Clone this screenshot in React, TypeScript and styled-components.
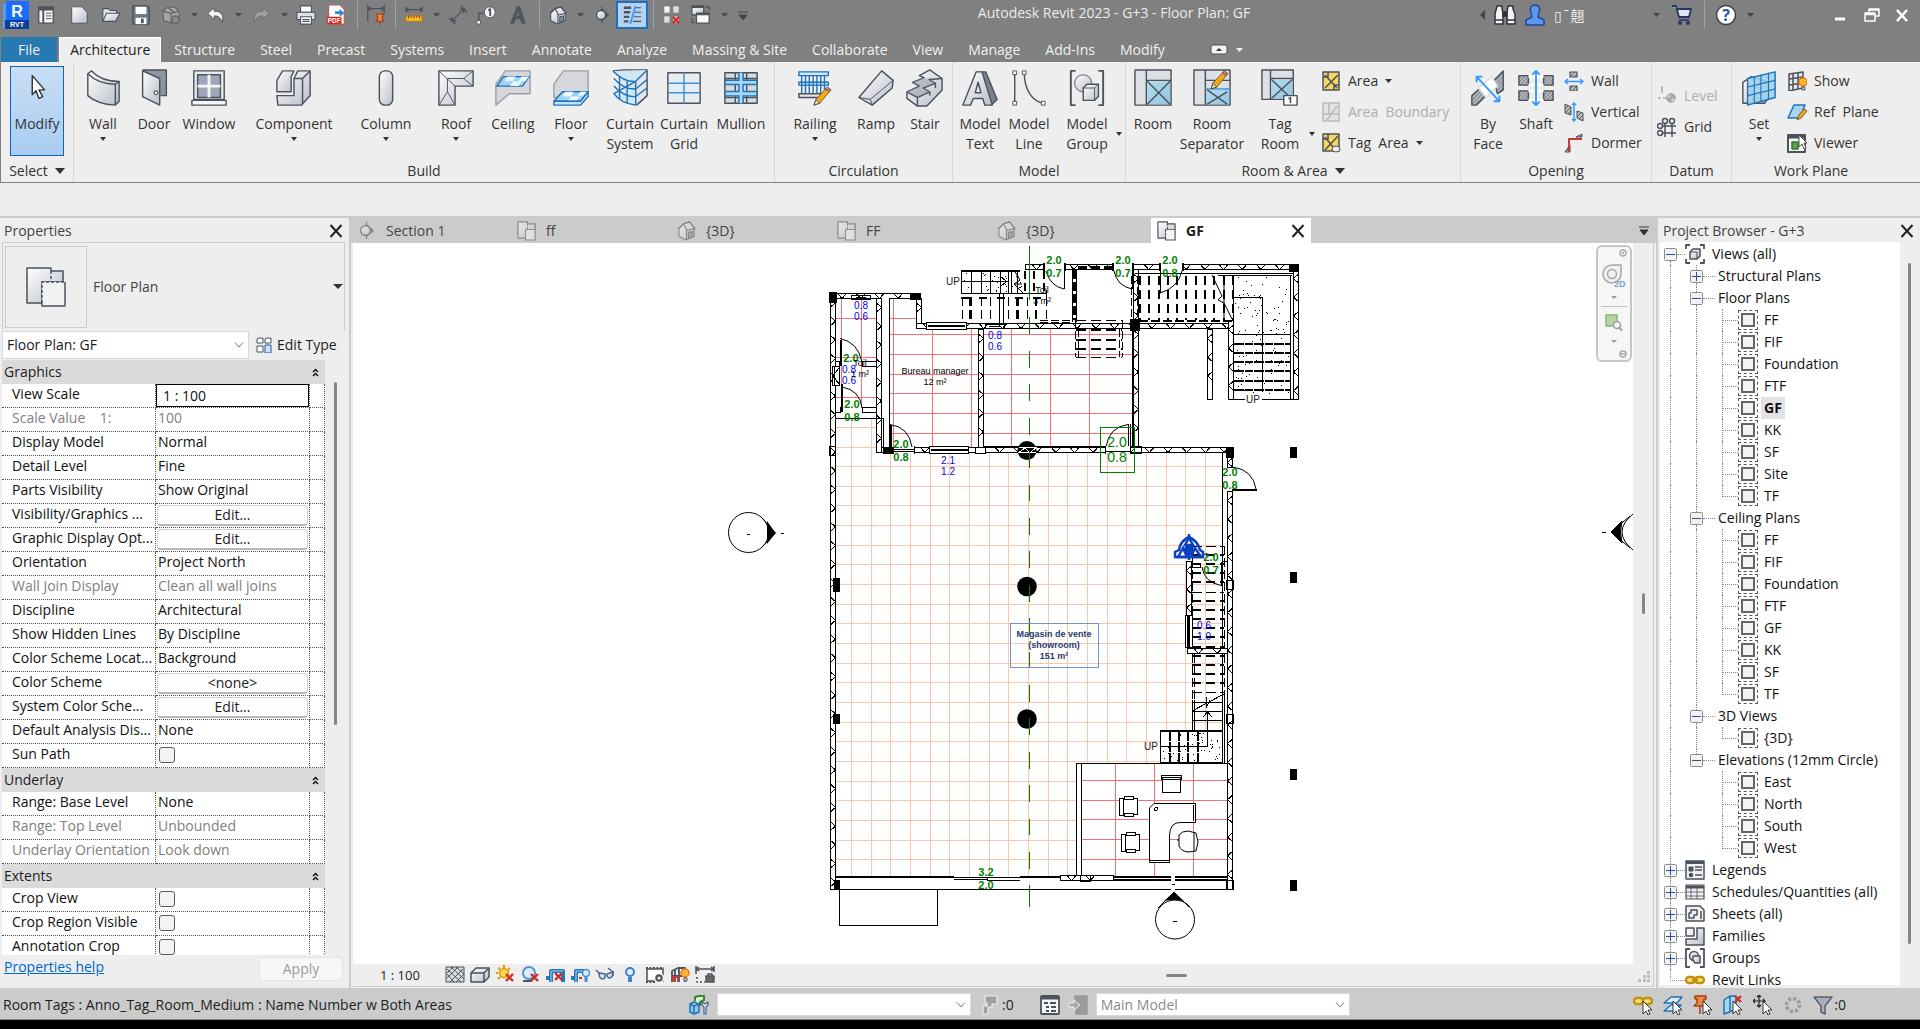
import React from "react";
import styled, { createGlobalStyle, css } from "styled-components";

const GlobalStyle = createGlobalStyle`
  *, *::before, *::after { box-sizing: border-box; }
  html, body { margin: 0; padding: 0; }
  body, button, input, select, table {
    font-family: "Open Sans", "Noto Sans", "Noto Sans CJK TC", sans-serif;
    font-size: 14px;
    line-height: 20px;
    color: #1e1e1e;
  }
  button, input, select { margin: 0; padding: 0; border: 0; background: none; }
`;

/* ---------- shared drawing helpers ---------- */

const METAL = "url(#metal)";
const GLASS = "url(#glass)";
const INK = "#4b525c";
const BLUE = "#1f73b8";

const Defs = () => (
  <HiddenSvg aria-hidden="true">
    <defs>
      <linearGradient id="metal" x1="0" y1="0" x2="1" y2="1">
        <stop offset="0" stopColor="#ffffff" />
        <stop offset="1" stopColor="#b9bec8" />
      </linearGradient>
      <linearGradient id="glass" x1="0" y1="0" x2="1" y2="1">
        <stop offset="0" stopColor="#b5dcee" />
        <stop offset="1" stopColor="#8ec6e0" />
      </linearGradient>
      <pattern id="hatch" width="4" height="4" patternUnits="userSpaceOnUse">
        <rect width="4" height="4" fill="#b9bdc4" />
        <path d="M0 4L4 0" stroke="#5a6068" strokeWidth="1" />
      </pattern>
    </defs>
  </HiddenSvg>
);

const HiddenSvg = styled.svg`
  position: absolute;
  width: 0;
  height: 0;
`;

const Svg = styled.svg`
  display: block;
  flex: none;
`;

type IconProps = { size?: number; box?: number; children: React.ReactNode };
const Icon = ({ size = 22, box, children }: IconProps) => (
  <Svg width={size} height={size} viewBox={`0 0 ${box ?? size} ${box ?? size}`} fill="none" stroke={INK} strokeWidth="1.5" strokeLinejoin="round" aria-hidden="true">
    {children}
  </Svg>
);

const Caret = ({ w = 7, h = 4, color = "#333" }: { w?: number; h?: number; color?: string }) => (
  <Svg width={w} height={h} viewBox="0 0 8 5" preserveAspectRatio="none" aria-hidden="true">
    <path d="M0 0H8L4 5Z" fill={color} />
  </Svg>
);

const RedX = ({ x, y, s = 7 }: { x: number; y: number; s?: number }) => (
  <path d={`M${x} ${y}l${s} ${s}M${x + s} ${y}l${-s} ${s}`} stroke="#cf2f27" strokeWidth="2.4" />
);

const Pencil = ({ x, y }: { x: number; y: number }) => (
  <g transform={`translate(${x} ${y})`} strokeWidth="1">
    <path d="M0 18L2 12L12 1L16 4L6 16Z" fill="#f6a81c" stroke="#7a5a1c" />
    <path d="M12 1L14 -1L18 2L16 4Z" fill="#c98a7a" stroke="#6a4a40" />
    <path d="M0 18L2 12L6 16Z" fill="#f3dfc0" stroke="#5b4c3a" />
  </g>
);

/* ---------- quick access toolbar ---------- */

const HousePaths = () => (
  <g strokeWidth="1.2">
    <path d="M3 9L8 4L14 2L19 8V17L10 21L3 17Z" fill={METAL} />
    <path d="M2 9L8 4L11 10V21M8 4L14 2L20 9L11 11" />
    <path d="M13 13l4-1v6l-4 1z" fill="#8a9099" />
  </g>
);
const SectionPaths = () => (
  <g>
    <path d="M11 2V20" strokeWidth="1.2" />
    <path d="M11 5L18 11L11 17Z" fill={INK} />
    <circle cx="10" cy="11" r="5" fill={METAL} />
  </g>
);
const PlanPaths = () => (
  <g strokeWidth="1.2">
    <path d="M2 2H12V4H20V10H10V19H2Z" fill={METAL} />
    <path d="M10 10H20V21H10Z" fill="#f4f4f6" stroke="none" />
    <path d="M12 4V10M10 19V10H20" strokeDasharray="2 1.4" />
    <path d="M10 19V21H20V10" />
  </g>
);
const PreviewPaths = () => (
  <g strokeWidth="1.5">
    <path d="M2 2H26V5H38V16H17V37H2Z" fill="url(#metal)" />
    <path d="M17 16H40V40H17Z" fill="#f1f2f4" stroke="none" />
    <path d="M26 5V16M17 37V16H40" strokeDasharray="3 2" />
    <path d="M17 37V40H40V16" />
  </g>
);

const qaIcons: Record<string, React.ReactNode> = {
  list: (
    <g>
      <rect x="3" y="2" width="16" height="18" fill="#f4f4f4" />
      <path d="M3 5H19M3 3H19M8 6V20" strokeWidth="2" />
      <path d="M11 9H17M11 12H17M11 15H17" strokeWidth="1" />
    </g>
  ),
  page: <path d="M3 2H14L20 8V20H3Z" fill={METAL} strokeWidth="1" />,
  open: (
    <g strokeWidth="1.2">
      <path d="M2 18V4H8L10 6H17V9" fill="#dfe2e6" />
      <path d="M2 18L6 9H21L16 18Z" fill={METAL} />
    </g>
  ),
  save: (
    <g strokeWidth="1.4">
      <path d="M2 1H18L20 3V21H2Z" fill="#6d7683" />
      <rect x="5" y="2" width="12" height="8" fill="#fff" stroke="none" />
      <rect x="5" y="14" width="12" height="7" fill="#fff" stroke="none" />
      <rect x="11" y="15" width="3" height="5" fill={INK} stroke="none" />
    </g>
  ),
  cube: (
    <g stroke="#5f5f5f" strokeWidth="1.2">
      <path d="M2 7L8 2L16 3L20 8V16L12 20L3 17Z" fill="#a5a5a5" />
      <path d="M2 7L11 9L20 7M11 9V20M8 3L14 8" />
      <circle cx="16" cy="16" r="4" fill="#8b8b8b" />
    </g>
  ),
  undo: <path d="M2 9L9 3V7C16 6 20 11 18 19C16 14 14 12 9 12V16Z" fill="#f4f4f4" strokeWidth="1" />,
  redo: <path d="M20 9L13 3V7C6 6 2 11 4 19C6 14 8 12 13 12V16Z" fill="#a0a0a0" stroke="#6c6c6c" strokeWidth="1" />,
  print: (
    <g strokeWidth="1.2">
      <rect x="5" y="1" width="12" height="7" fill="#fff" />
      <rect x="1" y="8" width="20" height="8" rx="1" fill="#dde0e4" />
      <path d="M5 13H17V21H5Z" fill="#fff" />
      <path d="M7 16H15M7 18H15" />
    </g>
  ),
  pdf: (
    <g>
      <path d="M5 0H15L20 5V21H3V0Z" fill="#fff" stroke="#c44" strokeWidth="1" />
      <path d="M10 7H15V4L20 9L15 13V10H10Z" fill="#2b86d0" stroke="none" />
      <rect x="1" y="13" width="16" height="8" fill="#e2231a" stroke="none" />
      <text x="2" y="20" fontSize="7" fontWeight="700" fill="#fff" stroke="none" fontFamily="Liberation Sans, sans-serif">PDF</text>
    </g>
  ),
  pin: (
    <g strokeWidth="1.4">
      <path d="M2 0V18M20 0V10M2 4H20M5 2L2 4L5 6M17 2L20 4L17 6" />
      <path d="M12 10H19V13H18V16L20 18H11L13 16V13H12ZM15.500 18V22" fill="#f08a3c" stroke="#a4431a" />
    </g>
  ),
  measure: (
    <g strokeWidth="1.4">
      <path d="M2 2V8M20 2V8M2 5H20M5 3L2 5L5 7M17 3L20 5L17 7" />
      <rect x="2" y="12" width="18" height="6" fill="#f8bd2c" stroke="#b77a12" />
      <path d="M5 12V15M8 12V14M11 12V15M14 12V14M17 12V15" stroke="#7a4c00" strokeWidth="1" />
    </g>
  ),
  dim: <path d="M4 18L18 4M1 14L8 21M14 1L21 8M5 13L4 18L9 17M13 5L18 4L17 9" />,
  tag: (
    <g>
      <circle cx="14" cy="8" r="6" fill="#f4f4f4" strokeWidth="1" />
      <path d="M2 18V9H7" />
      <rect x="0" y="17" width="4" height="4" fill="#fff" strokeWidth="1" />
      <path d="M12.500 6L14.500 4.500V12" strokeWidth="2" />
    </g>
  ),
  text: <path d="M3 20L10 2H13L19 20H15L13.500 15H8L6.500 20ZM9 12H13L11 6Z" fill="#50555c" stroke="#50555c" strokeWidth="1" />,
  house: <HousePaths />,
  section: <SectionPaths />,
  thin: (
    <g strokeWidth="2">
      <path d="M2 3H10M2 8H9M2 13H8M2 18H7" strokeWidth="2.6" />
      <path d="M15 3H21M14 8H21M13 13H21M12 18H21" strokeWidth="1.2" />
      <path d="M15 1L9 21" stroke="#3399ff" />
    </g>
  ),
  close: (
    <g strokeWidth="1">
      <path d="M2 1H9V9H2ZM12 1H19V9H12ZM2 12H9V20H2ZM12 12H19V20H12Z" fill={METAL} stroke="#777" />
      <RedX x={12} y={13} />
    </g>
  ),
  windows: (
    <g strokeWidth="1.4">
      <rect x="1" y="1" width="13" height="10" fill={METAL} />
      <rect x="6" y="9" width="14" height="11" fill="#fafafa" />
      <path d="M6 10H20M1 2H14" strokeWidth="2.4" />
      <path d="M16 2H20V6M1 14V19H4" />
    </g>
  ),
};

type QaItem = { kind: "icon" | "arrow" | "sep"; name?: string; w: number; label?: string };
const qaItems: QaItem[] = [
  { kind: "icon", name: "list", w: 32, label: "Home" },
  { kind: "icon", name: "page", w: 34, label: "New" },
  { kind: "icon", name: "open", w: 30, label: "Open" },
  { kind: "icon", name: "save", w: 30, label: "Save" },
  { kind: "icon", name: "cube", w: 30, label: "Synchronize" },
  { kind: "arrow", w: 16 },
  { kind: "icon", name: "undo", w: 28, label: "Undo" },
  { kind: "arrow", w: 16 },
  { kind: "icon", name: "redo", w: 30, label: "Redo" },
  { kind: "arrow", w: 16 },
  { kind: "icon", name: "print", w: 28, label: "Print" },
  { kind: "icon", name: "pdf", w: 32, label: "Export PDF" },
  { kind: "sep", w: 10 },
  { kind: "icon", name: "pin", w: 28, label: "Pin" },
  { kind: "sep", w: 10 },
  { kind: "icon", name: "measure", w: 28, label: "Measure" },
  { kind: "arrow", w: 16 },
  { kind: "icon", name: "dim", w: 28, label: "Aligned dimension" },
  { kind: "icon", name: "tag", w: 30, label: "Tag" },
  { kind: "icon", name: "text", w: 32, label: "Text" },
  { kind: "sep", w: 10 },
  { kind: "icon", name: "house", w: 28, label: "Default 3D view" },
  { kind: "arrow", w: 16 },
  { kind: "icon", name: "section", w: 28, label: "Section" },
  { kind: "icon", name: "thin", w: 32, label: "Thin lines" },
  { kind: "sep", w: 10 },
  { kind: "icon", name: "close", w: 28, label: "Close inactive views" },
  { kind: "icon", name: "windows", w: 30, label: "Switch windows" },
  { kind: "arrow", w: 16 },
];

const Page = styled.div`
  display: flex;
  flex-direction: column;
  height: 100vh;
  overflow: hidden;
  background: #eeeeee;
`;

const TitleBar = styled.header`
  display: grid;
  grid-template-columns: auto 1fr auto;
  align-items: center;
  height: 36px;
  flex: none;
  padding: 0 4px 6px 2px;
  background: #808080;
`;
const Cluster = styled.div<{ $end?: boolean }>`
  display: flex;
  align-items: center;
  justify-content: ${(p) => (p.$end ? "flex-end" : "flex-start")};
`;
const QaButton = styled.button<{ $w: number; $on?: boolean }>`
  display: flex;
  align-items: center;
  justify-content: center;
  width: ${(p) => p.$w}px;
  height: 28px;
  ${(p) => p.$on && css`
    border: 2px solid #1c6fc4;
    background: #b4d3f3;
  `}
`;
const QaSep = styled.span<{ $w: number }>`
  display: flex;
  justify-content: center;
  width: ${(p) => p.$w}px;
  &::before {
    content: "";
    width: 1px;
    height: 28px;
    background: #a2a2a2;
  }
`;
const WindowTitle = styled.h1`
  margin: 0;
  font-size: 14px;
  font-weight: 400;
  line-height: 20px;
  text-align: center;
  color: #ececec;
  padding-bottom: 4px;
`;
const UserName = styled.span`
  width: 96px;
  padding-left: 4px;
  color: #f0f0f0;
  font-family: "Noto Sans CJK TC", sans-serif;
  font-size: 14px;
`;

const RevitLogo = () => (
  <Svg width="26" height="28" viewBox="0 0 26 28" role="img" aria-label="Revit">
    <path d="M0 4L4 0V24L0 28Z" fill="#5e9cf0" />
    <rect x="3" y="0" width="23" height="20" fill="#1a6dff" />
    <rect x="2" y="19" width="24" height="9" fill="#0c3f96" />
    <text x="14" y="16" textAnchor="middle" fontSize="16" fontWeight="700" fill="#fff" fontFamily="Liberation Sans, sans-serif">R</text>
    <text x="14" y="26" textAnchor="middle" fontSize="7" fontWeight="700" fill="#fff" fontFamily="Liberation Sans, sans-serif">RVT</text>
  </Svg>
);

const TopBar = () => (
  <TitleBar>
    <Cluster>
      <QaButton $w={28} aria-label="Revit"><RevitLogo /></QaButton>
      {qaItems.map((it, i) =>
        it.kind === "sep" ? (
          <QaSep key={i} $w={it.w} />
        ) : it.kind === "arrow" ? (
          <QaButton key={i} $w={it.w} aria-label="More"><Caret color="#4c4c4c" /></QaButton>
        ) : (
          <QaButton key={i} $w={it.w} $on={it.name === "thin"} aria-label={it.label}>
            <Icon size={20} box={22}>{qaIcons[it.name as string]}</Icon>
          </QaButton>
        ),
      )}
      <QaButton $w={22} aria-label="Customize toolbar">
        <Svg width="10" height="9" viewBox="0 0 10 9"><path d="M0 1H10M1 4H9L5 9Z" fill="#444" stroke="#444" /></Svg>
      </QaButton>
    </Cluster>
    <WindowTitle>Autodesk Revit 2023 - G+3 - Floor Plan: GF</WindowTitle>
    <Cluster $end>
      <QaButton $w={16} aria-label="Collapse search">
        <Svg width="5" height="10" viewBox="0 0 5 10"><path d="M5 0V10L0 5Z" fill="#444" /></Svg>
      </QaButton>
      <QaButton $w={30} aria-label="Search">
        <Icon size={22}>
          <path d="M3 2H8V5L9 8V20H1V10ZM14 2H19V5L21 10V20H13V8Z" fill="#f4f4f4" stroke="#2c323c" />
          <path d="M9 8H13V12H9Z" fill="#2c323c" stroke="#2c323c" />
          <path d="M1 16H9M13 16H21" stroke="#2c323c" />
        </Icon>
      </QaButton>
      <QaButton $w={30} aria-label="Account">
        <Icon size={22}>
          <path d="M11 1C15 1 16 4 15.500 7C15 10 14 11 14 13L20 16V21H2V16L8 13C8 11 7 10 6.500 7C6 4 7 1 11 1Z" fill="#5d97ee" stroke="#20489c" />
        </Icon>
      </QaButton>
      <UserName>▯¯翹</UserName>
      <QaButton $w={20} aria-label="Account menu"><Caret color="#444" /></QaButton>
      <QaButton $w={32} aria-label="App store">
        <Icon size={22}>
          <path d="M1 2H5L8 13H18L20 5H6" fill="#dfe5f0" stroke="#24345e" strokeWidth="1.8" />
          <path d="M8 16H18" stroke="#24345e" />
          <circle cx="9" cy="19" r="2" fill="#24345e" stroke="none" />
          <circle cx="17" cy="19" r="2" fill="#24345e" stroke="none" />
        </Icon>
      </QaButton>
      <QaSep $w={12} />
      <QaButton $w={32} aria-label="Help">
        <Icon size={22}>
          <circle cx="11" cy="11" r="9.500" fill="#fff" stroke="#3a4250" />
          <text x="11" y="17" textAnchor="middle" fontSize="16" fontWeight="700" fill="#2456a8" stroke="none" fontFamily="Open Sans, sans-serif">?</text>
        </Icon>
      </QaButton>
      <QaButton $w={16} aria-label="Help menu"><Caret color="#444" /></QaButton>
      <QaSpacer />
      <QaButton $w={32} aria-label="Minimize"><Icon size={16}><path d="M3 12H13" stroke="#fff" strokeWidth="3" /></Icon></QaButton>
      <QaButton $w={32} aria-label="Restore">
        <Icon size={16}><path d="M5 5V2H15V9H11M1 6H11V14H1ZM1 7.500H11M5 3H15" stroke="#fff" /></Icon>
      </QaButton>
      <QaButton $w={28} aria-label="Close"><Icon size={16}><path d="M3 3L13 14M13 3L3 14" stroke="#fff" strokeWidth="2.6" /></Icon></QaButton>
    </Cluster>
  </TitleBar>
);

const QaSpacer = styled.span`
  width: 66px;
`;

/* ---------- ribbon ---------- */

const TabRow = styled.nav`
  display: flex;
  align-items: flex-end;
  height: 26px;
  flex: none;
  gap: 1px;
  padding-left: 1px;
  background: #808080;
`;
const RibbonTab = styled.button<{ $kind?: "file" | "active" }>`
  height: 25px;
  padding: 0 12px;
  color: #f0f0f0;
  white-space: nowrap;
  ${(p) => p.$kind === "file" && css`
    padding: 0 17px;
    margin-right: 1px;
    background: #2779b1;
  `}
  ${(p) => p.$kind === "active" && css`
    padding: 0 10px;
    color: #222;
    background: #eeeeee;
    border: 1px solid #ffffff;
    border-bottom: 0;
  `}
`;
const RibbonExtra = styled.span`
  display: flex;
  align-items: center;
  gap: 8px;
  height: 25px;
  padding-left: 32px;
`;

const Ribbon = styled.div`
  display: flex;
  height: 121px;
  flex: none;
  background: #eeeeee;
  border-left: 1px solid #808080;
  border-bottom: 1px solid #808080;
`;
const Panel = styled.section<{ $w?: number }>`
  display: flex;
  flex-direction: column;
  ${(p) => (p.$w ? css`width: ${p.$w}px; flex: none;` : css`flex: 1;`)}
  & + & { border-left: 1px solid #d8d8d8; }
`;
const PanelBody = styled.div`
  display: flex;
  height: 95px;
  padding: 4px 0 0 3px;
`;
const PanelTitle = styled.div`
  display: flex;
  align-items: center;
  justify-content: center;
  gap: 7px;
  height: 25px;
  padding-top: 3px;
  color: #333;
`;
const Big = styled.button<{ $w: number; $on?: boolean }>`
  display: flex;
  flex-direction: column;
  align-items: center;
  width: ${(p) => p.$w}px;
  height: 90px;
  padding-top: 3px;
  color: #333;
  white-space: nowrap;
  ${(p) => p.$on && css`
    margin-left: 6px;
    padding-top: 2px;
    border: 1px solid #0b66c2;
    background: linear-gradient(#c8def6, #a9cdf1);
  `}
`;
const BigLabel = styled.span`
  margin: 7px 0 3px;
  text-align: center;
  white-space: pre-line;
`;
const SideCaret = styled.span`
  display: flex;
  align-items: flex-end;
  width: 8px;
  height: 70px;
  margin-left: -4px;
`;
const SmallColumn = styled.div<{ $center?: boolean }>`
  display: flex;
  flex-direction: column;
  justify-content: ${(p) => (p.$center ? "center" : "flex-start")};
  gap: 11px;
  padding: 5px 0 0 4px;
  ${(p) => p.$center && css`padding: 0 0 0 2px;`}
`;
const Small = styled.button<{ $off?: boolean }>`
  display: flex;
  align-items: center;
  gap: 7px;
  height: 20px;
  color: ${(p) => (p.$off ? "#adadad" : "#333")};
  white-space: pre;
`;

const ribbonIcons: Record<string, React.ReactNode> = {
  modify: <path d="M15 7L15 27L19 23L22 31L26 29L22 22H28Z" fill="#fff" stroke="#333" />,
  wall: (
    <g>
      <path d="M4 5L8 2Q18 13 37 13V34L33 38Q14 37 4 28Z" fill={METAL} />
      <path d="M4 5Q15 16 33 16L37 13M33 16V38" />
    </g>
  ),
  door: (
    <g>
      <path d="M8 1H33V28H27" fill="#8d95a3" />
      <path d="M8 2L26 10V38L8 29Z" fill={METAL} />
      <circle cx="22" cy="25" r="2" fill="#fff" strokeWidth="1.200" />
    </g>
  ),
  window: (
    <g>
      <rect x="4" y="2" width="32" height="30" fill="#e9ebee" />
      <rect x="8" y="6" width="24" height="24" fill="#9ea7b8" />
      <path d="M20 6V30M8 18H32" stroke="#f2f4f7" strokeWidth="3" />
      <path d="M2 33H38V38H2Z" fill="#f6f7f8" />
    </g>
  ),
  component: (
    <g fill={METAL}>
      <path d="M8 2H20L17 8V24H2V12Z" />
      <path d="M24 2H37V28L28 38H3L2 28H20V10Z" />
      <path d="M20 10H29L37 2M29 10V37" fill="none" />
    </g>
  ),
  column: <rect x="13" y="2" width="14" height="36" rx="6" fill={METAL} />,
  roof: (
    <g>
      <path d="M2 2H38V18H19V38H2Z" fill={METAL} />
      <path d="M2 2L19 18M2 38L11 24L19 38M38 2L28 10L38 18M11 10V24M11 10H28" strokeWidth="1" />
    </g>
  ),
  ceiling: (
    <g>
      <path d="M2 16L12 2H38V26H16L2 38Z" fill="#d5d7da" stroke="#9aa0a8" />
      <path d="M10 8H37L30 18H3Z" fill="#9fd2f4" stroke={BLUE} />
      <path d="M14 8H23L20 13H11ZM20 13H29L26 18H17ZM29 8H37L33 13H26Z" fill="#e8f5fd" stroke="none" />
    </g>
  ),
  floor: (
    <g>
      <path d="M2 16L12 2H38V24L30 30H2Z" fill="#d5d7da" stroke="#9aa0a8" />
      <path d="M11 24H38L30 34H2Z" fill="#9fd2f4" stroke={BLUE} />
      <path d="M2 34H30L38 24V29L30 38H2Z" fill="#bfe3f8" stroke={BLUE} />
      <path d="M14 24H23L20 29H11ZM20 29H29L26 33H17ZM30 24H37L33 28H27Z" fill="#f1f9fe" stroke="none" />
    </g>
  ),
  curtain: (
    <g>
      <path d="M2 2L14 1H38V28L27 38" fill="#e1e5ea" />
      <path d="M2 2Q14 14 26 13L38 1M26 13V38Q10 36 3 26Z" fill="#cfe6f5" stroke={BLUE} />
      <path d="M9 8V32M17 12V36M3 10Q14 22 26 21L38 11M3 18Q14 30 26 29L38 20" stroke={BLUE} />
    </g>
  ),
  grid: (
    <g>
      <rect x="3" y="4" width="34" height="32" fill="#e8edf2" />
      <path d="M20 4V36M3 15H37M3 25H37" stroke="#3c93dc" />
    </g>
  ),
  mullion: (
    <g>
      <rect x="3" y="4" width="34" height="32" fill="#d5dade" />
      <path d="M14 4V36M26 4V36M3 10H37M3 30H37" />
      <path d="M20 4V36M3 14H37M3 26H37" stroke={BLUE} strokeWidth="6" />
      <path d="M20 4V36M4 14H36M4 26H36" stroke="#a8d8f4" strokeWidth="3" />
    </g>
  ),
  railing: (
    <g>
      <path d="M3 3H34V7H3ZM3 14H34V17H3Z" fill="#cfe9fa" stroke={BLUE} />
      <path d="M6 7V26M10 7V26M14 7V26M18 7V26M22 7V26M26 7V26M30 7V22" stroke={BLUE} />
      <path d="M3 26H26V30H3Z" fill="#e2e4e8" />
      <Pencil x={19} y={20} />
    </g>
  ),
  ramp: (
    <g fill={METAL}>
      <path d="M2 30L26 2L38 12L37 20L16 38Z" />
      <path d="M2 30L14 32L38 12M14 32L16 38" fill="none" strokeWidth="1" />
    </g>
  ),
  stair: (
    <g fill={METAL}>
      <path d="M1 24L14 18L7 14L19 9L14 7L25 1L38 10V22L22 39H12L1 31Z" />
      <path d="M1 24L12 30L25 24L18 20L31 15L24 11L38 10M12 30V39M25 24V28M31 15V20" fill="none" />
      <path d="M14 18L25 24L12 30L1 24ZM19 9L31 15L18 20L7 14Z" fill="#7e8694" fillOpacity="0.450" stroke="none" />
    </g>
  ),
  mtext: (
    <g>
      <path d="M20 3H26L38 32L32 38L20 8Z" fill="#7b828e" />
      <path d="M2 38L16 3H22L33 38H25L23 31H13L10 38ZM15 25H21L18 14Z" fill={METAL} />
    </g>
  ),
  mline: (
    <g>
      <path d="M5 4V36M15 4C15 22 24 35 36 36" />
      <path d="M3 2H7V6H3ZM3 34H7V38H3ZM13 2H17V6H13ZM33 34H37V38H33Z" fill="#fff" strokeWidth="1" />
    </g>
  ),
  mgroup: (
    <g>
      <path d="M8 2H3V38H8M32 2H37V38H32" strokeWidth="2" />
      <circle cx="16" cy="15" r="9" fill={METAL} stroke="#8a919c" />
      <path d="M16 20L20 16H32V29L28 33H16Z" fill={METAL} />
      <path d="M16 20H28V33M28 20L32 16" strokeWidth="1" />
    </g>
  ),
  room: (
    <g>
      <rect x="1" y="1" width="38" height="37" fill="#dde0e5" />
      <path d="M13 1V38M13 12H39" />
      <rect x="14" y="13" width="24" height="24" fill={GLASS} stroke="none" />
      <path d="M14 13L38 37M38 13L14 37" />
    </g>
  ),
  separator: (
    <g>
      <rect x="1" y="1" width="38" height="37" fill="#dde0e5" />
      <rect x="14" y="22" width="24" height="15" fill={GLASS} stroke="none" />
      <path d="M13 1V38M13 12H39M15 22L36 37M36 24L15 37" />
      <path d="M13 21H39" stroke="#3c93dc" />
      <Pencil x={19} y={3} />
    </g>
  ),
  tagroom: (
    <g>
      <rect x="1" y="1" width="33" height="31" fill="#dde0e5" />
      <path d="M10 1V32M10 10H34" />
      <rect x="11" y="11" width="22" height="20" fill={GLASS} stroke="none" />
      <path d="M11 11L32 31M33 11L11 31" />
      <rect x="24" y="28" width="14" height="10" fill="#fff" />
      <path d="M29 31.500L31 30V36" strokeWidth="1.600" />
    </g>
  ),
  byface: (
    <g>
      <path d="M26 12L36 2V22L30 26ZM3 38V28L12 20L18 28L8 38Z" fill="url(#hatch)" />
      <path d="M10 20L24 8L30 18L18 30Z" fill="#fff" stroke="#ddd" />
      <path d="M8 8L32 34M8 14V8H14M26 34H32V28" stroke="#3399ff" strokeWidth="2" />
    </g>
  ),
  shaft: (
    <g>
      <path d="M2 7H12V17H2ZM28 7H38V17H28ZM2 23H12V33H2ZM28 23H38V33H28Z" fill="url(#hatch)" />
      <path d="M12 8H28M12 17H28M12 23H28M12 33H28" stroke="#fff" strokeWidth="3" />
      <path d="M20 2V38M16 6L20 2L24 6M16 34L20 38L24 34" stroke="#3399ff" strokeWidth="2" />
    </g>
  ),
  set: (
    <g>
      <path d="M3 14L12 8L30 14V30L26 36L3 36Z" fill={METAL} />
      <path d="M8 10L37 3V30L8 38Z" fill="#9ed0ee" fillOpacity="0.850" stroke={BLUE} />
      <path d="M15 8V36M22 6V34M30 4V32M8 19L37 12M8 28L37 21" stroke={BLUE} strokeWidth="1.200" />
    </g>
  ),
};

const smallIcons: Record<string, React.ReactNode> = {
  area: <g><rect x="2" y="1" width="16" height="18" fill="#f6d565" /><path d="M2 6H7V1M4 4L16 17M17 4L4 17M13 19V14H18" /></g>,
  areab: <g stroke="#b9b9b9"><rect x="2" y="1" width="16" height="18" fill="#e2e2e2" /><path d="M2 12H18M8 1V12M6 18L16 4" /></g>,
  tagarea: <g><rect x="2" y="1" width="16" height="17" fill="#f6d565" /><path d="M2 6H7V1M4 4L12 14M17 3L4 17" /><ellipse cx="15" cy="16" rx="4" ry="3" fill="#eee" strokeWidth="1" /></g>,
  owall: <g><path d="M6 1H13V6H6ZM6 15H13V20H6Z" fill="url(#hatch)" strokeWidth="1.200" /><path d="M1 10.500H19M4 8L1 10.500L4 13M16 8L19 10.500L16 13" stroke="#3399ff" /></g>,
  vertical: <g><path d="M1 2L7 5V13L1 11ZM13 9L19 11V19L13 16Z" fill="url(#hatch)" strokeWidth="1" /><path d="M10 1V19M8 3L10 1L12 3M8 17L10 19L12 17" stroke="#3399ff" /></g>,
  dormer: <g><path d="M1 19L6 12V19ZM12 4L18 1V4Z" fill="url(#hatch)" strokeWidth="1" /><path d="M5 19V6H18" stroke="#c63a34" strokeWidth="2" /></g>,
  level: <g stroke="#aaa"><path d="M1 12H9" strokeDasharray="3 2" /><path d="M4 2L5 1V7" /><circle cx="14" cy="12" r="4" fill="#ddd" /><path d="M14 12V8A4 4 0 0 1 18 12ZM14 12V16A4 4 0 0 1 10 12Z" fill="#aaa" /></g>,
  gridd: <g><circle cx="8" cy="4" r="2.500" /><circle cx="15" cy="4" r="2.500" /><circle cx="3" cy="9" r="2.500" /><circle cx="3" cy="16" r="2.500" /><path d="M8 7V20M15 7V20M6 9H19M6 16H19" /></g>,
  show: <g><path d="M2 3L16 1V17L2 20Z" fill="#e3e6ea" /><path d="M6 2V19M11 2V18M2 8L16 6M2 14L16 12" /><circle cx="16" cy="11" r="4" fill="#ffb534" stroke="#e87b12" /><path d="M15 16H18V19H15Z" fill="#ddd" strokeWidth="1" /></g>,
  refplane: <g><path d="M1 16L7 3H18L13 16Z" fill="#a9d5f0" stroke={BLUE} /><path d="M10 18L12 13L17 7L20 9L14 16Z" fill="#f6a81c" stroke="#7a5a1c" strokeWidth="1" /></g>,
  viewer: <g><rect x="1" y="2" width="17" height="17" fill="#f6f6f6" strokeWidth="2" /><path d="M1 4H18" strokeWidth="3" /><path d="M5 9H11V16H5Z" fill="#59a548" stroke="#39752c" /><path d="M12 2V14L15 11L17 16L19 15L17 10H20Z" fill="#fff" strokeWidth="1" /></g>,
};

type BigItem = { icon: string; label: string; w: number; drop?: boolean; side?: boolean; on?: boolean };
const BigButton = ({ icon, label, w, drop, side, on }: BigItem) => (
  <>
    <Big $w={w} $on={on}>
      <Icon size={38} box={40}>{ribbonIcons[icon]}</Icon>
      <BigLabel>{label}</BigLabel>
      {drop && <Caret w={6} h={4} />}
    </Big>
    {side && <SideCaret><Caret w={6} h={4} /></SideCaret>}
  </>
);
const SmallButton = ({ icon, label, off, drop }: { icon: string; label: string; off?: boolean; drop?: boolean }) => (
  <Small $off={off} disabled={off}>
    <Icon size={20}>{smallIcons[icon]}</Icon>
    {label}
    {drop && <Caret w={7} h={4} />}
  </Small>
);

const buildItems: BigItem[] = [
  { icon: "wall", label: "Wall", w: 52, drop: true },
  { icon: "door", label: "Door", w: 50 },
  { icon: "window", label: "Window", w: 60 },
  { icon: "component", label: "Component", w: 110, drop: true },
  { icon: "column", label: "Column", w: 74, drop: true },
  { icon: "roof", label: "Roof", w: 66, drop: true },
  { icon: "ceiling", label: "Ceiling", w: 48 },
  { icon: "floor", label: "Floor", w: 68, drop: true },
  { icon: "curtain", label: "Curtain\nSystem", w: 50 },
  { icon: "grid", label: "Curtain\nGrid", w: 58 },
  { icon: "mullion", label: "Mullion", w: 56 },
];

const tabs = ["Structure", "Steel", "Precast", "Systems", "Insert", "Annotate", "Analyze", "Massing & Site", "Collaborate", "View", "Manage", "Add-Ins", "Modify"];

const RibbonArea = () => (
  <>
    <TabRow>
      <RibbonTab $kind="file">File</RibbonTab>
      <RibbonTab $kind="active">Architecture</RibbonTab>
      {tabs.map((t) => <RibbonTab key={t}>{t}</RibbonTab>)}
      <RibbonExtra>
        <Svg width="18" height="11" viewBox="0 0 18 11"><rect x="1" y="1" width="16" height="9" rx="2" fill="#f4f4f4" stroke="#4b525c" /><path d="M6 7H12L9 4Z" fill="#333" /></Svg>
        <Caret color="#f0f0f0" />
      </RibbonExtra>
    </TabRow>
    <Ribbon>
      <Panel $w={72}>
        <PanelBody><BigButton icon="modify" label="Modify" w={54} on /></PanelBody>
        <PanelTitle>Select <Caret w={10} h={6} /></PanelTitle>
      </Panel>
      <Panel $w={701}>
        <PanelBody>{buildItems.map((b) => <BigButton key={b.label} {...b} />)}</PanelBody>
        <PanelTitle>Build</PanelTitle>
      </Panel>
      <Panel $w={178}>
        <PanelBody>
          <BigButton icon="railing" label="Railing" w={74} drop />
          <BigButton icon="ramp" label="Ramp" w={48} />
          <BigButton icon="stair" label="Stair" w={50} />
        </PanelBody>
        <PanelTitle>Circulation</PanelTitle>
      </Panel>
      <Panel $w={173}>
        <PanelBody>
          <BigButton icon="mtext" label={"Model\nText"} w={48} />
          <BigButton icon="mline" label={"Model\nLine"} w={50} />
          <BigButton icon="mgroup" label={"Model\nGroup"} w={66} side />
        </PanelBody>
        <PanelTitle>Model</PanelTitle>
      </Panel>
      <Panel $w={335}>
        <PanelBody>
          <BigButton icon="room" label="Room" w={48} />
          <BigButton icon="separator" label={"Room\nSeparator"} w={70} />
          <BigButton icon="tagroom" label={"Tag\nRoom"} w={66} side />
          <SmallColumn>
            <SmallButton icon="area" label="Area" drop />
            <SmallButton icon="areab" label="Area  Boundary" off />
            <SmallButton icon="tagarea" label="Tag  Area" drop />
          </SmallColumn>
        </PanelBody>
        <PanelTitle>Room &amp; Area <Caret w={10} h={6} /></PanelTitle>
      </Panel>
      <Panel $w={191}>
        <PanelBody>
          <BigButton icon="byface" label={"By\nFace"} w={48} />
          <BigButton icon="shaft" label="Shaft" w={48} />
          <SmallColumn>
            <SmallButton icon="owall" label="Wall" />
            <SmallButton icon="vertical" label="Vertical" />
            <SmallButton icon="dormer" label="Dormer" />
          </SmallColumn>
        </PanelBody>
        <PanelTitle>Opening</PanelTitle>
      </Panel>
      <Panel $w={80}>
        <PanelBody>
          <SmallColumn $center>
            <SmallButton icon="level" label="Level" off />
            <SmallButton icon="gridd" label="Grid" />
          </SmallColumn>
        </PanelBody>
        <PanelTitle>Datum</PanelTitle>
      </Panel>
      <Panel>
        <PanelBody>
          <BigButton icon="set" label="Set" w={48} drop />
          <SmallColumn>
            <SmallButton icon="show" label="Show" />
            <SmallButton icon="refplane" label="Ref  Plane" />
            <SmallButton icon="viewer" label="Viewer" />
          </SmallColumn>
        </PanelBody>
        <WorkPlaneTitle>Work Plane</WorkPlaneTitle>
      </Panel>
    </Ribbon>
  </>
);
const WorkPlaneTitle = styled(PanelTitle)`
  padding-right: 30px;
`;
const OptionsBar = styled.div`
  height: 33px;
  flex: none;
  background: #eeeeee;
`;

/* ---------- properties palette ---------- */

const Workspace = styled.main`
  display: grid;
  grid-template-columns: 351px minmax(0, 1fr) 264px;
  flex: 1;
  min-height: 0;
  border-top: 2px solid #cbcbcb;
`;
const Palette = styled.aside`
  display: flex;
  flex-direction: column;
  min-height: 0;
  border-right: 2px solid #cbcbcb;
  background: #eeeeee;
`;
const PaletteHeader = styled.div`
  display: flex;
  align-items: center;
  justify-content: space-between;
  height: 24px;
  flex: none;
  padding: 1px 6px 0 4px;
  color: #444;
`;
const PlainButton = styled.button`
  display: flex;
`;
const CloseMark = () => (
  <Svg width="14" height="14" viewBox="0 0 14 14"><path d="M1.500 1L12.500 13M12.500 1L1.500 13" stroke="#222" strokeWidth="2" /></Svg>
);
const TypeSelector = styled.button`
  display: flex;
  align-items: center;
  gap: 6px;
  height: 88px;
  margin: 0 4px 0 2px;
  padding: 0 1px 0 2px;
  border: 1px solid #cccccc;
  border-bottom: 0;
  color: #444;
  text-align: left;
`;
const TypePreview = styled.span`
  display: flex;
  align-items: center;
  justify-content: center;
  width: 82px;
  height: 82px;
  border: 1px solid #cccccc;
`;
const Grow = styled.span`
  flex: 1;
`;
const InstanceRow = styled.div`
  display: flex;
  align-items: center;
  gap: 7px;
  height: 30px;
  flex: none;
  padding: 0 2px;
`;
const SelectBox = styled.span<{ $w: number; $h: number }>`
  position: relative;
  width: ${(p) => p.$w}px;
  height: ${(p) => p.$h}px;
  svg {
    position: absolute;
    right: 5px;
    top: calc(50% - 3px);
    pointer-events: none;
  }
`;
const SelectInput = styled.select<{ $muted?: boolean }>`
  appearance: none;
  width: 100%;
  height: 100%;
  padding: 0 24px 0 4px;
  border: 1px solid #d8d8d8;
  background: #ffffff;
  color: ${(p) => (p.$muted ? "#8a8a8a" : "#1a1a1a")};
  opacity: 1;
`;
const Chevron = () => (
  <Svg width="10" height="6" viewBox="0 0 10 6"><path d="M1 0.500L5 5L9 0.500" fill="none" stroke="#777" /></Svg>
);
const EditType = styled.button`
  display: flex;
  align-items: center;
  gap: 5px;
  white-space: nowrap;
`;
const PropsArea = styled.div`
  display: flex;
  flex: 1;
  min-height: 0;
  margin-left: 2px;
  overflow: hidden;
`;
const PropsTable = styled.table`
  width: 323px;
  height: max-content;
  table-layout: fixed;
  border-collapse: separate;
  border-spacing: 0;
  background: #fff;
`;
const GroupHead = styled.th`
  height: 24px;
  padding: 0 6px 0 2px;
  background: #dbdbdb;
  font-weight: 400;
  text-align: left;
`;
const GroupHeadInner = styled.span`
  display: flex;
  justify-content: space-between;
  align-items: center;
`;
const PropCell = styled.td<{ $off?: boolean; $label?: boolean }>`
  height: 24px;
  padding: 0 0 0 ${(p) => (p.$label ? 10 : 2)}px;
  border-right: 1px dotted #555;
  border-bottom: 1px dotted #555;
  color: ${(p) => (p.$off ? "#808080" : "#111")};
  white-space: pre;
  overflow: hidden;
  text-overflow: ellipsis;
  line-height: 20px;
  vertical-align: top;
`;
const ScaleInput = styled.input`
  display: block;
  width: 153px;
  height: 23px;
  margin-left: -2px;
  padding-left: 6px;
  border: 1px solid #000;
  color: #111;
`;
const CellButton = styled.button`
  display: block;
  width: 151px;
  height: 21px;
  margin: 1px 0 0 -1px;
  border: 1px solid #cfcfcf;
  border-bottom: 2px solid #b8b8b8;
  border-radius: 4px;
  background: #fdfdfd;
  line-height: 18px;
`;
const Check = styled.input`
  appearance: none;
  display: block;
  width: 16px;
  height: 16px;
  margin: 3px 0 0 1px;
  border: 1px solid #5c5c5c;
  border-radius: 3px;
  background: #f3f3f3;
`;
const PropsScroll = styled.div`
  flex: 1;
  padding: 22px 0 0 9px;
`;
const Thumb = styled.div<{ $w: number; $h: number }>`
  width: ${(p) => p.$w}px;
  height: ${(p) => p.$h}px;
  border-radius: 2px;
  background: #858585;
`;
const PaletteFooter = styled.div`
  display: flex;
  justify-content: space-between;
  height: 33px;
  flex: none;
  padding: 2px 6px 0 4px;
`;
const HelpLink = styled.a`
  color: #0066cc;
  text-decoration: underline;
`;
const ApplyButton = styled.button`
  width: 84px;
  height: 24px;
  border: 1px solid #e4e4e4;
  border-radius: 4px;
  background: #f7f7f7;
  color: #9a9a9a;
`;

type Prop = { n: string; v?: string; k?: "btn" | "check" | "scale"; off?: boolean };
const groups: { title: string; rows: Prop[] }[] = [
  {
    title: "Graphics",
    rows: [
      { n: "View Scale", v: "1 : 100", k: "scale" },
      { n: "Scale Value    1:", v: "100", off: true },
      { n: "Display Model", v: "Normal" },
      { n: "Detail Level", v: "Fine" },
      { n: "Parts Visibility", v: "Show Original" },
      { n: "Visibility/Graphics ...", v: "Edit...", k: "btn" },
      { n: "Graphic Display Opt...", v: "Edit...", k: "btn" },
      { n: "Orientation", v: "Project North" },
      { n: "Wall Join Display", v: "Clean all wall joins", off: true },
      { n: "Discipline", v: "Architectural" },
      { n: "Show Hidden Lines", v: "By Discipline" },
      { n: "Color Scheme Locat...", v: "Background" },
      { n: "Color Scheme", v: "<none>", k: "btn" },
      { n: "System Color Sche...", v: "Edit...", k: "btn" },
      { n: "Default Analysis Dis...", v: "None" },
      { n: "Sun Path", k: "check" },
    ],
  },
  {
    title: "Underlay",
    rows: [
      { n: "Range: Base Level", v: "None" },
      { n: "Range: Top Level", v: "Unbounded", off: true },
      { n: "Underlay Orientation", v: "Look down", off: true },
    ],
  },
  {
    title: "Extents",
    rows: [
      { n: "Crop View", k: "check" },
      { n: "Crop Region Visible", k: "check" },
      { n: "Annotation Crop", k: "check" },
    ],
  },
];

const PropValue = ({ p, id }: { p: Prop; id: string }) => {
  if (p.k === "scale") return <ScaleInput id={id} defaultValue={p.v} />;
  if (p.k === "btn") return <CellButton id={id}>{p.v}</CellButton>;
  if (p.k === "check") return <Check id={id} type="checkbox" />;
  return <>{p.v}</>;
};

const Properties = () => (
  <Palette>
    <PaletteHeader>
      Properties
      <PlainButton aria-label="Close properties"><CloseMark /></PlainButton>
    </PaletteHeader>
    <TypeSelector>
      <TypePreview>
        <Icon size={42}>
          <PreviewPaths />
        </Icon>
      </TypePreview>
      Floor Plan
      <Grow />
      <Caret w={10} h={5} />
    </TypeSelector>
    <InstanceRow>
      <SelectBox $w={247} $h={28}>
        <SelectInput aria-label="View instance"><option>Floor Plan: GF</option></SelectInput>
        <Chevron />
      </SelectBox>
      <EditType>
        <Icon size={16}>
          <path d="M1 2L3 1H7V6H1ZM9 2L11 1H15V6H9ZM1 9H7V15H1Z" fill="#fff" strokeWidth="1" />
          <rect x="9" y="8" width="6" height="8" fill="#cfe2f5" stroke="#2456a8" strokeWidth="1" />
        </Icon>
        Edit Type
      </EditType>
    </InstanceRow>
    <PropsArea>
      <PropsTable>
        <colgroup><col width="154" /><col width="154" /><col width="15" /></colgroup>
        <tbody>
          {groups.map((g) => (
            <React.Fragment key={g.title}>
              <tr>
                <GroupHead colSpan={3}>
                  <GroupHeadInner>
                    {g.title}
                    <Svg width="7" height="9" viewBox="0 0 7 9"><path d="M1 4L3.500 1.500L6 4M1 8L3.500 5.500L6 8" fill="none" stroke="#000" strokeWidth="1.300" /></Svg>
                  </GroupHeadInner>
                </GroupHead>
              </tr>
              {g.rows.map((p, i) => {
                const id = `${g.title}-${i}`;
                return (
                  <tr key={id}>
                    <PropCell $label $off={p.off}>{p.k ? <label htmlFor={id}>{p.n}</label> : p.n}</PropCell>
                    <PropCell $off={p.off}><PropValue p={p} id={id} /></PropCell>
                    <PropCell />
                  </tr>
                );
              })}
            </React.Fragment>
          ))}
        </tbody>
      </PropsTable>
      <PropsScroll><Thumb $w={3} $h={343} /></PropsScroll>
    </PropsArea>
    <PaletteFooter>
      <HelpLink href="#help">Properties help</HelpLink>
      <ApplyButton disabled>Apply</ApplyButton>
    </PaletteFooter>
  </Palette>
);

/* ---------- floor plan drawing ---------- */

const range = (from: number, to: number, step: number) => {
  const out: number[] = [];
  for (let v = from; v <= to; v += step) out.push(v);
  return out;
};

/* Horizontal cavity wall with its brick hatch marks. */
const HWall = ({ x1, x2, y }: { x1: number; x2: number; y: number }) => (
  <g>
    <rect x={x1} y={y} width={x2 - x1} height={5} fill="#fff" />
    <path d={range(x1 + 7, x2 - 9, 18.7).map((x) => `M${x} ${y}l4.500 5l4.500 -5`).join("")} />
  </g>
);
/* Vertical cavity wall. */
const VWall = ({ x, y1, y2, flip }: { x: number; y1: number; y2: number; flip?: boolean }) => (
  <g>
    <rect x={x} y={y1} width={5} height={y2 - y1} fill="#fff" />
    <path d={range(y1 + 5, y2 - 9, 18.7).map((y) => (flip ? `M${x + 5} ${y}l-5 4.500l5 4.500` : `M${x} ${y}l5 4.500l-5 4.500`)).join("")} />
  </g>
);
const Grid = ({ x1, x2, y1, y2, xs, ys, color }: { x1: number; x2: number; y1: number; y2: number; xs: number[]; ys: number[]; color: string }) => (
  <path stroke={color} d={xs.map((x) => `M${x + 0.5} ${y1}V${y2}`).join("") + ys.map((y) => `M${x1} ${y + 0.5}H${x2}`).join("")} />
);
/* Concrete speckle. */
const Speckle = ({ x, y, w, h, n }: { x: number; y: number; w: number; h: number; n: number }) => {
  let seed = Math.round(x * 7 + y * 13);
  const next = () => {
    seed = (seed * 1103515245 + 12345) % 2147483648;
    return seed / 2147483648;
  };
  return <path d={Array.from({ length: n }, () => `M${Math.round(x + next() * w)} ${Math.round(y + next() * h) + 0.5}h1`).join("")} />;
};
const Solid = ({ x, y, w, h }: { x: number; y: number; w: number; h: number }) => <rect x={x} y={y} width={w} height={h} fill="#000" stroke="none" />;

const PlanText = styled.text<{ $tone: "door" | "window" | "big" | "room" | "picked" | "note" }>`
  font-family: "Liberation Sans", Arial, sans-serif;
  text-anchor: middle;
  stroke: none;
  ${(p) => p.$tone === "door" && css`font-size: 11px; font-weight: 700; fill: #008000;`}
  ${(p) => p.$tone === "window" && css`font-size: 10px; fill: #0000f0;`}
  ${(p) => p.$tone === "big" && css`font-size: 14px; fill: #008000;`}
  ${(p) => p.$tone === "room" && css`font-size: 9px; fill: #000;`}
  ${(p) => p.$tone === "picked" && css`font-size: 9px; font-weight: 700; fill: #1f3a70;`}
  ${(p) => p.$tone === "note" && css`font-size: 10px; fill: #222;`}
`;

const orangeX = range(851, 1222, 19.66).map(Math.round);
const orangeY = range(466, 876, 19.67).map(Math.round);

const doorTags: [number, number, string][] = [
  [1054, 264, "2.0"], [1054, 277, "0.7"], [1123, 264, "2.0"], [1123, 277, "0.7"], [1170, 264, "2.0"], [1170, 277, "0.8"],
  [851, 362, "2.0"], [852, 408, "2.0"], [852, 421, "0.8"], [901, 448, "2.0"], [901, 461, "0.8"],
  [1230, 476, "2.0"], [1230, 489, "0.8"], [1211, 561, "2.0"], [1211, 574, "0.7"], [986, 876, "3.2"], [986, 889, "2.0"],
];
const windowTags: [number, number, string][] = [
  [861, 309, "0.8"], [861, 320, "0.6"], [995, 339, "0.8"], [995, 350, "0.6"], [849, 373, "0.8"], [849, 384, "0.6"],
  [948, 464, "2.1"], [948, 475, "1.2"], [1204, 629, "0.6"], [1204, 640, "1.0"],
];

const Chair = ({ x, y }: { x: number; y: number }) => (
  <g transform={`translate(${x} ${y})`} fill="#fff">
    <rect x="4.500" y="2.500" width="14" height="16" />
    <rect x="0.500" y="2.500" width="4" height="17" rx="1" />
    <rect x="5.500" y="0.500" width="9" height="3" rx="1" />
    <rect x="5.500" y="17.500" width="9" height="3" rx="1" />
  </g>
);

const FloorPlan = () => (
  <PlanSvg viewBox="353 243 1280 721" preserveAspectRatio="xMidYMid meet" fill="none" stroke="#000" strokeWidth="1" shapeRendering="crispEdges" role="img" aria-label="Ground floor plan">
    {/* floor finishes */}
    <Grid x1={836} x2={1222} y1={453} y2={876} xs={orangeX} ys={orangeY} color="#fcc6ab" />
    <Grid x1={836} x2={883} y1={418} y2={453} xs={[851, 871]} ys={[427, 447]} color="#fcc6ab" />
    <Grid x1={836} x2={876} y1={298} y2={407} xs={[841, 861]} ys={[318, 357, 397]} color="#f57070" />
    <Grid x1={890} x2={978} y1={329} y2={447} xs={[893, 932, 971]} ys={[334, 354, 374, 393, 413, 433]} color="#f57070" />
    <Grid x1={890} x2={916} y1={298} y2={329} xs={[893]} ys={[318]} color="#f57070" />
    <Grid x1={984} x2={1133} y1={329} y2={447} xs={[1011, 1050, 1089]} ys={[334, 354, 374, 393, 413, 433]} color="#f57070" />

    {/* outer walls */}
    <VWall x={830.5} y1={293} y2={889} />
    <HWall x1={830.5} x2={920.5} y={293.5} />
    <VWall x={916.5} y1={298} y2={328} />
    <HWall x1={916} x2={1233} y={323.5} />
    <HWall x1={1025} x2={1298} y={264.5} />
    <VWall x={1293.5} y1={269} y2={399} flip />
    <VWall x={1207.5} y1={329} y2={399} flip />
    <VWall x={1228.5} y1={320} y2={399} flip />
    <HWall x1={876} x2={1233} y={447.5} />
    <VWall x={1227.5} y1={453} y2={467} flip />
    <VWall x={1227.5} y1={491} y2={889} flip />
    <path d="M836 889.500H1233M836 882V889M1222.500 453V762" />

    {/* inner walls */}
    <VWall x={876.5} y1={298} y2={452} />
    <rect x="882" y="298" width="7" height="149" fill="#fff" stroke="none" />
    <path d="M889.500 298V447M883.500 447V418.500H836" />
    <VWall x={978.5} y1={329} y2={447} />
    <VWall x={1133.5} y1={269} y2={447} />
    <path d="M1133 329V447M984 447H1105" strokeWidth="2" />
    <HWall x1={862} x2={876} y={361.5} />
    <path d="M836 361.500H839V366.500H836M862 407.500H876M862 412.500H876M862 407V412M836 412.500H840V407" />
    <path d="M1072.500 269V322M1076.500 269V322" />
    <path d="M999.500 293V323M1003.500 293V323" />

    {/* door and window openings */}
    <rect x="1044" y="263" width="21" height="8" fill="#fff" stroke="none" />
    <rect x="1113" y="263" width="20" height="8" fill="#fff" stroke="none" />
    <rect x="1160" y="263" width="23" height="8" fill="#fff" stroke="none" />
    <path d="M1044 263V271M1065 263V271M1113 263V271M1133 263V271M1160 263V271M1183 263V271" strokeWidth="2" />
    <path d="M1064.500 270V289M1132.500 270V289M1160.500 270V293" />
    <path d="M1064 289Q1050 286 1046 271M1132 289Q1117 286 1114 271M1160 293Q1178 288 1182 271" shapeRendering="auto" />
    <rect x="894" y="446" width="20" height="8" fill="#fff" stroke="none" />
    <path d="M894 449.500H914M894 451.500H914M914.500 446V454" />
    <path d="M891 425V450" strokeWidth="2" />
    <path d="M890 424.500Q909 427 912 447M1128 424.500Q1109 427 1106 447" shapeRendering="auto" />
    <path d="M1130.500 424V449M1128.500 424V449" />
    <rect x="1106" y="446" width="24" height="8" fill="#fff" stroke="none" />
    <path d="M1106 451.500H1130M1105.500 446V454M1130.500 446.500H1141.500V453.500H1130.500Z" />
    <path d="M840.500 340V366M841.500 384V412" strokeWidth="2" />
    <path d="M840 338.500Q858 342 862 362M842 387Q860 390 862 408" shapeRendering="auto" />
    <rect x="832.500" y="366.500" width="7" height="19" fill="#fff" />
    <path d="M834.500 366V386M839 368L833 376L839 384" />
    <path d="M1232 490H1257" strokeWidth="2" />
    <path d="M1233 467Q1253 470 1256 489" shapeRendering="auto" />
    <rect x="926.500" y="322.500" width="40" height="7" fill="#fff" />
    <path d="M928 326H965" strokeWidth="2" />
    <rect x="929.500" y="446.500" width="39" height="7" fill="#fff" />
    <path d="M931 450H968" strokeWidth="2" />
    <path d="M851.500 295.500H870.500V299.500H851.500ZM856 297.500H866M985.500 324.500H1004.500V328.500H985.500ZM989 326.500H1001" />
    <rect x="975.500" y="447.500" width="10" height="6" fill="#fff" />

    {/* upper left stair */}
    <Speckle x={963} y={272} w={58} h={20} n={36} />
    <path d="M961.500 270V294M961.500 293.500H1047M961.500 281.500H1007M1001 277L1007 281.500L1001 286M1008.500 270V293M1011.500 270V293M1017.500 270V293" />
    <path d="M961 271H1020" strokeWidth="2" />
    <path d="M961 298H1046" strokeWidth="2" strokeDasharray="8 10" />
    <path d="M971.500 271V293M981.500 271V293M990.500 271V293M1000.500 271V293" strokeWidth="1" />
    <path d="M1014 270L1020 280L1014 284L1024 294M1022 284H1014" shapeRendering="auto" />
    <path d="M1025 271V294M1034 271V294M1044 271V294" strokeWidth="2" strokeDasharray="8 4" />
    <path d={range(962, 1046, 9.3).map((x) => `M${Math.round(x)}.5 297V323`).join("")} strokeDasharray="9 4" />
    <path d="M970 297V323M1017 297V323M1036 297V323" strokeWidth="2" strokeDasharray="9 4" />
    <path d="M1046.500 290V300M1040 322.500H1072M1040 320.500H1072" strokeDasharray="8 3" />
    <path d="M1074 270V320" strokeWidth="3" strokeDasharray="9 3" />
    <path d="M1078 267H1113" strokeWidth="3" strokeDasharray="9 4" />

    {/* dashed flight below the lift shaft */}
    <path d="M1076 320.500H1122M1076 357.500H1122" strokeDasharray="10 5" />
    <path d="M1076 330H1122M1076 340H1122M1076 349H1122" strokeWidth="2" strokeDasharray="10 5" />
    <path d="M1075.500 320V357M1078.500 329V357M1119.500 329V357M1122.500 320V357" strokeDasharray="8 3" />

    {/* upper right stair */}
    <path d={range(1140, 1234, 9.3).map((x) => `M${Math.round(x)} 276V320`).join("")} strokeWidth="2" strokeDasharray="9 5" />
    <path d="M1131.500 276V318M1137.500 276V318" strokeDasharray="8 3" />
    <path d="M1139 321H1233" strokeWidth="2" strokeDasharray="9 3" />
    <path d="M1135 273.500H1293M1218 275.500H1292M1233.500 276V323" />
    <path d="M1212 275L1222 296L1218 300L1224 303L1232 319M1224 276V318" shapeRendering="auto" />
    <Speckle x={1235} y={277} w={54} h={56} n={60} />
    <Speckle x={1235} y={335} w={54} h={60} n={50} />
    <path d="M1234 297.500H1262.500V392M1290.500 276V399M1234 334.500H1290M1234 399.500H1245M1262 399.500H1298" />
    <path d="M1234 344H1290M1234 353H1290M1234 362H1290M1234 371H1290M1234 381H1290M1234 390H1290" strokeDasharray="10 1 8 1" strokeWidth="2" />

    {/* right-hand stair */}
    <VWall x={1186.5} y1={561} y2={615} flip />
    <rect x="1185.500" y="615.500" width="7" height="32" fill="#fff" />
    <path d="M1188.500 615V648" strokeWidth="3" />
    <HWall x1={1187} x2={1227} y={648.5} />
    <path d="M1192.500 546V648M1224.500 546V648M1192.500 654V700M1194.500 654V700M1224.500 654V700" strokeDasharray="9 3" />
    <path d="M1192 546.500H1224M1192 592.500H1224M1192 692.500H1224" strokeDasharray="10 4" />
    <path
      d={[555, 564, 573, 582, 601, 610, 619, 628, 637, 647, 656, 665, 674, 683].map((y) => `M1192 ${y}H1224`).join("")}
      strokeWidth="2" strokeDasharray="9 5"
    />
    <path d="M1192.500 700V730M1194.500 700V730M1224.500 692V763M1192 702.500H1222M1192 711.500H1222M1192 720.500H1222M1192 711L1224 694M1206 697V708L1210 700" />
    <rect x="1160.500" y="730.500" width="62" height="32" fill="#fff" />
    <Speckle x={1162} y={732} w={58} h={28} n={48} />
    <path d="M1170 731V762M1179 731V762M1188 731V762M1198 731V762" strokeWidth="2" strokeDasharray="10 1" />
    <path d="M1161 731H1223" strokeWidth="2" />
    <path d="M1161 746.500H1207.500V712M1203 717L1207.500 712L1212 717" />
    <path d="M1191 563.500H1200V567.500H1191M1222 561.500H1228" />
    <path d="M1222 562V586" strokeWidth="2" />
    <path d="M1202 567Q1204 582 1221 585.500" shapeRendering="auto" />

    {/* manager office */}
    <rect x="1076.500" y="763.500" width="151" height="113" fill="#fff" />
    <Grid x1={1082} x2={1227} y1={764} y2={876} xs={[1115, 1154, 1193]} ys={[780, 800, 819, 839, 859]} color="#f57070" />
    <path d="M1081.500 763V876" />
    <Chair x={1119} y={796} />
    <Chair x={1121} y={832} />
    <g fill="#fff">
      <path d="M1149.500 808L1154 803.500H1195.500V822.500H1181Q1170 822 1169.500 835V862.500H1149.500Z" shapeRendering="auto" />
      <circle cx="1156" cy="809" r="1.500" />
      <path d="M1193.500 805V821M1150 860.500H1169M1162.500 777.500H1180.500V792.500H1162.500ZM1161.500 775.500H1181.500V779.500H1161.500Z" />
      <path d="M1179 835Q1182 831 1188 831L1196 833L1198 842L1196 851L1188 852Q1181 851 1179 846ZM1194 832V851M1177 840H1179" shapeRendering="auto" />
    </g>

    {/* shop front */}
    <path d="M836 877H954M1020 877H1060" strokeWidth="2" />
    <path d="M954 877.500H1020M954 879.500H987V877M987 880.500H1020" />
    <HWall x1={1060} x2={1113} y={875.5} />
    <rect x="1080.500" y="875.500" width="10" height="6" />
    <path d="M1113 877H1227M1113 880H1227" strokeWidth="2" />
    <rect x="1171" y="875" width="4" height="16" fill="#fff" stroke="none" />
    <path d="M839.500 889V925.500H937.500V889" />

    {/* columns */}
    <Solid x={829} y={292} w={8} h={11} />
    <Solid x={910} y={293} w={11} h={7} />
    <Solid x={1289} y={264} w={10} h={8} />
    <Solid x={1130} y={319} w={10} h={12} />
    <Solid x={883} y={447} w={11} h={7} />
    <Solid x={1226} y={447} w={8} h={11} />
    <Solid x={833} y={578} w={7} h={14} />
    <Solid x={833} y={714} w={7} h={10} />
    <Solid x={834} y={880} w={6} h={10} />
    {[447, 572, 769, 880].map((y) => <Solid key={y} x={1290} y={y} w={7} h={11} />)}
    <path d="M1226.500 580.500H1233.500V589.500H1226.500ZM1226.500 714.500H1233.500V723.500H1226.500ZM1226.500 880.500H1233.500V889.500H1226.500ZM829.500 446.500H835.500V455.500H829.500Z" />
    <g fill="#000" stroke="none" shapeRendering="auto">
      <circle cx="1027" cy="450.500" r="9.500" />
      <circle cx="1027" cy="586.500" r="9.800" />
      <circle cx="1027" cy="719" r="9.800" />
    </g>
    <path d="M1019 447.500H1036L1030 453L1025 448L1019 452.500H1036" stroke="#fff" />

    {/* reference plane */}
    <path d="M1029.500 246V300M1029.500 317V334M1029.500 885V907" stroke="#008000" />
    <path d="M1029.500 351V870" stroke="#008000" strokeDasharray="16.700 16.700" />

    {/* elevation markers */}
    <g shapeRendering="auto">
      <circle cx="748.500" cy="532.500" r="20" />
      <path d="M767 521V544L775.500 533Z" fill="#000" stroke="none" />
      <path d="M762 518L775.500 533L762 547M747 534.500H750M781 533.500H784" />
      <circle cx="1175" cy="919.500" r="19.500" />
      <path d="M1164 901Q1174 899 1184 901L1174 892Z" fill="#000" stroke="none" />
      <path d="M1158 908L1174 892L1189 907M1173 921.500H1177M1172 884.500H1175" />
      <path d="M1633 514Q1611 532 1633 550" />
      <path d="M1611 532L1622 521Q1619 532 1622 543Z" fill="#000" />
      <path d="M1611 532L1630 516M1611 532L1630 548M1602 532.500H1606" />
    </g>

    {/* annotations */}
    {doorTags.map(([x, y, s], i) => <PlanText key={i} $tone="door" x={x} y={y}>{s}</PlanText>)}
    {windowTags.map(([x, y, s], i) => <PlanText key={i} $tone="window" x={x} y={y}>{s}</PlanText>)}
    <rect x="1100.500" y="427.500" width="34" height="45" stroke="#008000" />
    <PlanText $tone="big" x={1117} y={447}>2.0</PlanText>
    <PlanText $tone="big" x={1117} y={462}>0.8</PlanText>
    <PlanText $tone="room" x={935} y={374}>Bureau manager</PlanText>
    <PlanText $tone="room" x={935} y={385}>12 m²</PlanText>
    <PlanText $tone="room" x={1042} y={293}>Toil</PlanText>
    <PlanText $tone="room" x={1042} y={304}>3 m²</PlanText>
    <PlanText $tone="room" x={860} y={366}>Toil</PlanText>
    <PlanText $tone="room" x={860} y={377}>1 m²</PlanText>
    <PlanText $tone="note" x={953} y={285}>UP</PlanText>
    <PlanText $tone="note" x={1253} y={403}>UP</PlanText>
    <PlanText $tone="note" x={1151} y={750}>UP</PlanText>
    <rect x="1010.500" y="623.500" width="88" height="44" stroke="#6f92da" />
    <PlanText $tone="picked" x={1054} y={637}>Magasin de vente</PlanText>
    <PlanText $tone="picked" x={1054} y={648}>(showroom)</PlanText>
    <PlanText $tone="picked" x={1054} y={659}>151 m²</PlanText>
    <g stroke="#0a41c0" strokeWidth="2.500" shapeRendering="auto">
      <path d="M1175 557V552L1179 550Q1180 541 1189 537Q1198 541 1200 550L1203 552V557Z" />
      <path d="M1189 534V539M1185 545L1189 538L1193 545ZM1178 557L1183 548L1187 557ZM1191 557L1195 548L1201 557Z" />
      <circle cx="1189" cy="550" r="4" fill="#0a41c0" />
      <path d="M1189 550V560" />
    </g>
  </PlanSvg>
);
const PlanSvg = styled.svg`
  display: block;
  width: 100%;
  height: 100%;
`;

/* ---------- drawing area ---------- */

const Center = styled.section`
  display: flex;
  flex-direction: column;
  min-height: 0;
  background: #eeeeee;
`;
const ViewTabs = styled.div`
  display: flex;
  align-items: center;
  height: 25px;
  flex: none;
  background: #cbcbcb;
`;
const ViewTab = styled.button<{ $on?: boolean }>`
  display: flex;
  align-items: center;
  gap: 9px;
  width: 160px;
  height: 25px;
  padding: 0 6px 0 5px;
  background: ${(p) => (p.$on ? "#ffffff" : "transparent")};
  color: ${(p) => (p.$on ? "#1a1a1a" : "#444")};
  font-weight: ${(p) => (p.$on ? 700 : 400)};
  svg:first-child { opacity: ${(p) => (p.$on ? 1 : 0.55)}; }
`;
const TabMenu = styled.button`
  display: flex;
  margin: 0 7px 0 auto;
`;
const ViewFrame = styled.div`
  display: grid;
  grid-template-columns: minmax(0, 1fr) 20px;
  grid-template-rows: minmax(0, 1fr) 22px;
  flex: 1;
  min-height: 0;
  margin: 0 2px 1px 2px;
  border-right: 1px solid #cbcbcb;
  border-bottom: 1px solid #cbcbcb;
`;
const Canvas = styled.div`
  position: relative;
  min-height: 0;
  background: #ffffff;
`;
const VScroll = styled.div`
  display: flex;
  justify-content: center;
  align-items: center;
`;
const ViewControls = styled.div`
  display: flex;
  align-items: center;
  gap: 5px;
  padding-left: 27px;
`;
const ScaleText = styled.button`
  width: 60px;
  text-align: left;
  font-size: 13px;
`;
const HThumb = styled.div`
  flex: 1;
  display: flex;
  justify-content: center;
`;
const Grip = styled.div`
  display: flex;
  align-items: flex-end;
  justify-content: flex-end;
  padding: 3px;
`;
const NavBar = styled.div`
  position: absolute;
  top: 2px;
  right: 1px;
  display: flex;
  flex-direction: column;
  align-items: center;
  justify-content: space-between;
  width: 36px;
  height: 117px;
  padding: 2px 3px;
  border: 2px solid #c6c6c6;
  border-radius: 6px;
  background: #f6f6f6;
`;
const NavEnd = styled.span`
  align-self: flex-end;
`;
const NavRule = styled.span`
  width: 26px;
  height: 1px;
  background: #c2c2c2;
`;

const controlIcons: React.ReactNode[] = [
  <g><rect x="1" y="2" width="18" height="15" fill="#ddd" strokeWidth="1" /><path d="M2 4L16 17M6 2L19 14M11 2L19 9M2 9L9 17M18 4L5 17M13 2L2 13M8 2L2 8M19 9L11 17" strokeWidth="1" /></g>,
  <g><path d="M1 8L6 3H19V12L14 17H1Z" fill={METAL} /><path d="M1 8H14V17M14 8L19 3" /></g>,
  <g><circle cx="9" cy="8" r="4.500" fill="#ffd84a" stroke="#e29a13" /><path d="M9 0V3M1 8H3M3 3L5 4M15 3L13 5M3 14L5 12" stroke="#e29a13" strokeWidth="2" /><RedX x={11} y={9} /></g>,
  <g><path d="M3 16H12" strokeWidth="2" /><circle cx="9" cy="8" r="6" fill="#dcecfb" stroke="#5a92c8" strokeWidth="2" /><RedX x={11} y={9} /></g>,
  <g><path d="M6 17V6H18V17M1 13H6" stroke="#2877bd" strokeWidth="4" /><path d="M6 17V6H18" stroke="#9fd2f4" strokeWidth="1" /><RedX x={10} y={8} /></g>,
  <g><path d="M6 17V6H14M1 13H6" stroke="#2877bd" strokeWidth="4" /><path d="M6 17V6H14" stroke="#9fd2f4" strokeWidth="1" /><path d="M9 13H12" stroke="#cf2f27" strokeWidth="2" /><circle cx="16" cy="8" r="3.500" fill="#d9ebfb" stroke="#4b8bd0" /><path d="M16 12V17" stroke="#4b8bd0" strokeWidth="3" /></g>,
  <g stroke="#4a6484"><path d="M1 5L5 9M13 3L18 7V11" /><path d="M4 8Q4 14 8 14Q11 13 10 9ZM12 9Q12 13 15 13Q18 12 18 7Z" fill="#dbe6f0" /></g>,
  <g><circle cx="10" cy="7" r="4" fill="#e4f1fd" stroke="#3c80d0" strokeWidth="2" /><path d="M8 12H12V17H8Z" fill="#3c80d0" stroke="none" /></g>,
  <g><rect x="2" y="4" width="16" height="12" fill="#fff" strokeWidth="1.500" /><path d="M1 3H19M1 17H10" strokeDasharray="2 1.500" strokeWidth="2" /><circle cx="14" cy="13" r="4.500" fill="#555" stroke="#fff" /><circle cx="14" cy="13" r="1.500" fill="#eee" stroke="none" /></g>,
  <g><path d="M2 17V6L8 3H15V17M5 5V17M9 3V17M2 11H15" strokeWidth="1.800" /><path d="M3 17V12H8V17" stroke="#c93a32" strokeWidth="2" /><circle cx="15" cy="8" r="4" fill="#ffb534" stroke="#e87b12" /><path d="M14 13H17V16H14Z" fill="#ddd" strokeWidth="1" /></g>,
  <g><path d="M1 1V9M19 1V7M1 4H19M4 2L1 4L4 6M16 2L19 4L16 6" /><path d="M2 12V17H10" strokeDasharray="2 2" /><rect x="11" y="11" width="8" height="6" fill="#666" stroke="#555" /><path d="M13 11V9H17V11" /></g>,
];

const views: { n: string; i: React.ReactNode; on?: boolean }[] = [
  { n: "Section 1", i: <SectionPaths /> },
  { n: "ff", i: <PlanPaths /> },
  { n: "{3D}", i: <HousePaths /> },
  { n: "FF", i: <PlanPaths /> },
  { n: "{3D}", i: <HousePaths /> },
  { n: "GF", i: <PlanPaths />, on: true },
];

const DrawingArea = () => (
  <Center>
    <ViewTabs>
      {views.map((v, i) => (
        <ViewTab key={i} $on={v.on}>
          <Icon size={21} box={22}>{v.i}</Icon>
          {v.n}
          {v.on && <><Grow /><CloseMark /></>}
        </ViewTab>
      ))}
      <TabMenu aria-label="Tab list">
        <Svg width="10" height="9" viewBox="0 0 10 9"><path d="M0 1H10M1 4H9L5 9Z" fill="#333" stroke="#333" /></Svg>
      </TabMenu>
    </ViewTabs>
    <ViewFrame>
      <Canvas>
        <FloorPlan />
        <NavBar>
          <NavEnd><Icon size={8}><circle cx="4" cy="4" r="3" stroke="#aaa" /><path d="M3 3L5 5M5 3L3 5" stroke="#aaa" strokeWidth="1" /></Icon></NavEnd>
          <PlainButton aria-label="Steering wheel">
            <Icon size={24}>
              <path d="M1 10A9 9 0 0 1 10 1H19V10A9 9 0 0 1 1 10Z" fill="#f0f0f0" stroke="#a4a8ac" />
              <circle cx="10" cy="10" r="4.500" stroke="#a4a8ac" />
              <text x="12" y="23" fontSize="9" fontWeight="700" fill="#7ba3d0" stroke="none" fontFamily="Liberation Sans, sans-serif">2D</text>
            </Icon>
          </PlainButton>
          <Caret w={6} h={3} color="#999" />
          <NavRule />
          <PlainButton aria-label="Zoom region">
            <Icon size={18}>
              <rect x="1" y="1" width="11" height="11" fill="#b7d3a4" stroke="#8bb277" />
              <circle cx="12" cy="11" r="3.500" fill="#f6f6f6" stroke="#9a9ea2" /><path d="M14 13L17 17" stroke="#9a9ea2" strokeWidth="2" />
            </Icon>
          </PlainButton>
          <Caret w={6} h={3} color="#999" />
          <NavEnd><Icon size={8}><circle cx="4" cy="4" r="3" stroke="#aaa" /><path d="M2 4H6" stroke="#aaa" /></Icon></NavEnd>
        </NavBar>
      </Canvas>
      <VScroll><Thumb $w={3} $h={21} /></VScroll>
      <ViewControls>
        <ScaleText>1 : 100</ScaleText>
        {controlIcons.map((c, i) => <PlainButton key={i} aria-label={`View control ${i + 1}`}><Icon size={20}>{c}</Icon></PlainButton>)}
        <HThumb><Thumb $w={21} $h={3} /></HThumb>
      </ViewControls>
      <Grip>
        <Svg width="12" height="12" viewBox="0 0 12 12"><path d="M9 0H12V3H9ZM5 4H8V7H5ZM9 4H12V7H9ZM0 8H3V11H0ZM5 8H8V11H5ZM9 8H12V11H9Z" fill="#bdbdbd" /></Svg>
      </Grip>
    </ViewFrame>
  </Center>
);

/* ---------- project browser ---------- */

const Browser = styled(Palette)`
  border-right: 0;
  border-left: 2px solid #cbcbcb;
  padding-left: 1px;
`;
const TreeArea = styled.div`
  display: flex;
  flex: 1;
  min-height: 0;
  margin: 0 9px 3px 1px;
`;
const Tree = styled.ul`
  flex: 1;
  margin: 0 8px 0 0;
  padding: 1px 0 0 4px;
  list-style: none;
  overflow: hidden;
  background: #fff;
`;
const TreeRow = styled.li`
  display: flex;
  align-items: center;
  height: 22px;
  color: #111;
  white-space: nowrap;
`;
const Guide = styled.span<{ $last?: boolean; $w?: number }>`
  align-self: stretch;
  width: ${(p) => p.$w ?? 26}px;
  padding-left: 6px;
  &::before {
    content: "";
    display: block;
    height: ${(p) => (p.$last ? 12 : 22)}px;
    border-left: 1px dotted #8a8a8a;
  }
`;
const Dots = styled.span<{ $w: number; $pull?: boolean }>`
  width: ${(p) => p.$w}px;
  margin-left: ${(p) => (p.$pull ? -15 : 0)}px;
  border-top: 1px dotted #8a8a8a;
`;
const ExpandCell = styled.span<{ $up?: boolean; $down?: boolean }>`
  display: flex;
  flex-direction: column;
  align-items: center;
  align-self: stretch;
  width: 13px;
  &::before, &::after {
    content: "";
    flex: 1;
    border-left: 1px dotted #8a8a8a;
  }
  &::before { visibility: ${(p) => (p.$up ? "visible" : "hidden")}; }
  &::after { visibility: ${(p) => (p.$down ? "visible" : "hidden")}; }
`;
const NodeLabel = styled.span<{ $gap: number; $on?: boolean }>`
  padding-left: ${(p) => p.$gap}px;
  ${(p) => p.$on && css`
    margin-left: 3px;
    padding: 1px 3px;
    background: #e3e3e3;
    font-weight: 700;
  `}
`;
const ViewBox = styled.input`
  appearance: none;
  width: 20px;
  height: 20px;
  border: 1px dashed #555;
  background: #fff;
  padding: 2px;
  &::before {
    content: "";
    display: block;
    width: 14px;
    height: 14px;
    border: 2px solid #666;
    background: #f3f3f3;
  }
`;
const Expander = ({ open }: { open?: boolean }) => (
  <PlainButton aria-label={open ? "Collapse" : "Expand"}>
    <Svg width="13" height="13" viewBox="0 0 13 13">
      <rect x="0.500" y="0.500" width="12" height="12" rx="1" fill="#f2f2f2" stroke="#8c8c8c" />
      <path d={open ? "M2 6.500H11" : "M2 6.500H11M6.500 2V11"} stroke="#2c4d9c" />
    </Svg>
  </PlainButton>
);

const nodeIcons: Record<string, React.ReactNode> = {
  "Views (all)": <g><path d="M5 1H1V5M15 1H19V5M5 19H1V15M15 19H19V15" strokeWidth="1.800" /><path d="M5 8L8 5H15V12L12 15H5Z" fill={METAL} /><path d="M5 8H12V15" strokeWidth="1" /></g>,
  Legends: <g><rect x="1" y="1" width="18" height="18" fill="#eef0f2" /><path d="M1 2.500H19" strokeWidth="3" /><path d="M4 7H8V11H4Z" fill={INK} strokeWidth="1" /><path d="M10 7H17M10 10H17M10 15H17" /><circle cx="6" cy="15" r="1.500" fill={INK} /></g>,
  "Schedules/Quantities (all)": <g strokeWidth="1.200"><rect x="1" y="3" width="18" height="14" fill="#eef0f2" /><path d="M1 5H19" strokeWidth="3" /><path d="M6 6V17M12 6V17M1 10H19M1 14H19" strokeWidth="0.800" /></g>,
  "Sheets (all)": <g><path d="M1 2H15L19 6V17H1Z" fill="#eef0f2" /><path d="M4 9V14H9V11H12V6H6V9ZM16 7V15" /></g>,
  Families: <g fill={METAL}><path d="M1 2H9V10H1ZM12 2H19V19H1V13H12Z" /></g>,
  Groups: <g><path d="M5 1H1V19H5M15 1H19V19H15" strokeWidth="1.800" /><circle cx="9" cy="8" r="4.500" fill={METAL} /><path d="M8 8H15V15H10L8 12Z" fill={METAL} /></g>,
  "Revit Links": <g stroke="#c3900d" strokeWidth="2.400"><rect x="1" y="7" width="9" height="6" rx="3" fill="#fbe27a" /><rect x="10" y="7" width="9" height="6" rx="3" fill="#fbe27a" /><path d="M7 10H13" /></g>,
};

type Branch = { n: string; open: boolean; kids: string[] };
const viewBranches: Branch[] = [
  { n: "Structural Plans", open: false, kids: [] },
  { n: "Floor Plans", open: true, kids: ["FF", "FIF", "Foundation", "FTF", "GF", "KK", "SF", "Site", "TF"] },
  { n: "Ceiling Plans", open: true, kids: ["FF", "FIF", "Foundation", "FTF", "GF", "KK", "SF", "TF"] },
  { n: "3D Views", open: true, kids: ["{3D}"] },
  { n: "Elevations (12mm Circle)", open: true, kids: ["East", "North", "South", "West"] },
];
const roots = ["Legends", "Schedules/Quantities (all)", "Sheets (all)", "Families", "Groups"];

const RootRow = ({ name, open, first }: { name: string; open?: boolean; first?: boolean }) => (
  <TreeRow>
    <ExpandCell $up={!first} $down><Expander open={open} /></ExpandCell>
    <Dots $w={8} />
    <Icon size={20}>{nodeIcons[name]}</Icon>
    <NodeLabel $gap={7}>{name}</NodeLabel>
  </TreeRow>
);

const ProjectBrowser = () => (
  <Browser>
    <PaletteHeader>
      Project Browser - G+3
      <PlainButton aria-label="Close project browser"><CloseMark /></PlainButton>
    </PaletteHeader>
    <TreeArea>
      <Tree>
        <RootRow name="Views (all)" open first />
        {viewBranches.map((b, bi) => {
          const last = bi === viewBranches.length - 1;
          return (
            <React.Fragment key={b.n}>
              <TreeRow>
                <Guide />
                <ExpandCell $up $down={!last}><Expander open={b.open} /></ExpandCell>
                <Dots $w={12} />
                <NodeLabel $gap={3}>{b.n}</NodeLabel>
              </TreeRow>
              {b.kids.map((k, i) => {
                const id = `${b.n}-${k}`;
                const current = b.n === "Floor Plans" && k === "GF";
                return (
                  <TreeRow key={id}>
                    <Guide />
                    {last ? <BlankCell /> : <Guide />}
                    <Guide $w={22} $last={i === b.kids.length - 1} />
                    <Dots $w={15} $pull />
                    <ViewBox id={id} type="checkbox" />
                    <NodeLabel as="label" htmlFor={id} $gap={6} $on={current}>{k}</NodeLabel>
                  </TreeRow>
                );
              })}
            </React.Fragment>
          );
        })}
        {roots.map((r) => <RootRow key={r} name={r} />)}
        <TreeRow>
          <Guide $w={21} $last />
          <Dots $w={15} $pull />
          <Icon size={20}>{nodeIcons["Revit Links"]}</Icon>
          <NodeLabel $gap={7}>Revit Links</NodeLabel>
        </TreeRow>
      </Tree>
      <BrowserScroll><Thumb $w={3} $h={681} /></BrowserScroll>
    </TreeArea>
  </Browser>
);
const BlankCell = styled.span`
  width: 26px;
`;
const BrowserScroll = styled.div`
  padding-top: 21px;
`;

/* ---------- status bar ---------- */

const StatusBar = styled.footer`
  display: grid;
  grid-template-columns: 686px 1fr auto;
  align-items: center;
  height: 32px;
  flex: none;
  padding: 2px 6px 0 3px;
  border-bottom: 1px solid #858585;
  background: #cbcbcb;
`;
const StatusGroup = styled.div`
  display: flex;
  align-items: center;
  gap: 8px;
`;
const StatusIcons = styled.div`
  display: flex;
  align-items: center;
  gap: 10px;
  padding-right: 68px;
`;
const FilterCount = styled.span`
  display: flex;
  align-items: center;
  gap: 3px;
  margin-right: 18px;
`;
const BottomEdge = styled.div`
  height: 9px;
  flex: none;
  background: #000;
`;

const Pointer = () => <path d="M10 6V19L13 16L15 20L17 19L15 15H19Z" fill="#fff" stroke="#333" strokeWidth="1" />;
const selectIcons: React.ReactNode[] = [
  <g><rect x="1" y="3" width="9" height="6" rx="3" stroke="#c3900d" strokeWidth="2.400" fill="#fbe27a" /><rect x="10" y="3" width="9" height="6" rx="3" stroke="#c3900d" strokeWidth="2.400" fill="#fbe27a" /><Pointer /></g>,
  <g><path d="M1 8L8 2H19L14 8ZM1 16L8 10H18L13 16Z" fill="#d7ecfa" stroke={BLUE} /><Pointer /></g>,
  <g><path d="M2 1H13V4H11V8L14 11H1L4 8V4H2ZM7 11V19" fill="#f08a3c" stroke="#a4431a" /><Pointer /></g>,
  <g><path d="M1 5L7 1V17L1 19ZM7 1H13V16H7Z" fill="#a7d6f2" stroke={BLUE} /><RedX x={12} y={1} s={6} /><Pointer /></g>,
  <g><path d="M6 0V12M0 6H12M4 2L6 0L8 2M4 10L6 12L8 10M2 4L0 6L2 8M10 4L12 6L10 8" stroke="#222" strokeWidth="1.200" /><Pointer /></g>,
  <g><circle cx="10" cy="10" r="6.500" stroke="#9a9a9a" strokeWidth="3.500" strokeDasharray="3 2" /></g>,
];

const Status = () => (
  <StatusBar>
    <span>Room Tags : Anno_Tag_Room_Medium : Name Number w Both Areas</span>
    <StatusGroup>
      <Icon size={20}>
        <path d="M6 6V2L10 1H15V5L11 7V11" fill="#e8f6dc" stroke="#2e8b2e" strokeWidth="2" />
        <path d="M1 9L5 7L10 9V17L5 19L1 17ZM1 9L5 11L10 9M5 11V19" fill="#8fc7f0" stroke={BLUE} strokeWidth="1.500" />
        <path d="M13 7V10L15 12V19H17V12L19 10V7L16 9Z" fill="#e4ebf4" stroke="#47608a" strokeWidth="1.200" />
      </Icon>
      <SelectBox $w={254} $h={23}>
        <SelectInput aria-label="Active workset" disabled $muted><option> </option></SelectInput>
        <Chevron />
      </SelectBox>
      <FilterCount>
        <Icon size={20}><path d="M6 1H18V9H13V12H9V19H4V11H8V8H6Z" fill="#a0a0a0" stroke="#f0f0f0" strokeWidth="1.200" /></Icon>
        :0
      </FilterCount>
      <Icon size={20}>
        <rect x="1" y="1" width="18" height="18" rx="1" fill="#f4f6f8" strokeWidth="1.800" />
        <path d="M1 3H19" strokeWidth="3" /><path d="M4 8H8M10 8H16M6 12H9M11 12H16M6 16H9M11 16H16" strokeWidth="1.800" />
      </Icon>
      <Icon size={20}><path d="M6 1H19V19H8V14" fill="#9a9a9a" stroke="#9a9a9a" /><path d="M1 8H6V5L12 10L6 15V12H1Z" fill="#aaa" stroke="#f0f0f0" strokeWidth="1" /></Icon>
      <SelectBox $w={254} $h={23}>
        <SelectInput aria-label="Design option" disabled $muted><option>Main Model</option></SelectInput>
        <Chevron />
      </SelectBox>
    </StatusGroup>
    <StatusIcons>
      {selectIcons.map((s, i) => <PlainButton key={i} aria-label={`Selection option ${i + 1}`}><Icon size={20}>{s}</Icon></PlainButton>)}
      <SelectionFilter>
        <Icon size={20}><path d="M1 2H19L12 11V19L8 17V11Z" fill="#a9afb8" stroke="#5a616b" /></Icon>
        :0
      </SelectionFilter>
    </StatusIcons>
  </StatusBar>
);
const SelectionFilter = styled.button`
  display: flex;
  align-items: center;
  gap: 1px;
`;

export default function App() {
  return (
    <Page>
      <GlobalStyle />
      <Defs />
      <TopBar />
      <RibbonArea />
      <OptionsBar />
      <Workspace>
        <Properties />
        <DrawingArea />
        <ProjectBrowser />
      </Workspace>
      <Status />
      <BottomEdge />
    </Page>
  );
}
